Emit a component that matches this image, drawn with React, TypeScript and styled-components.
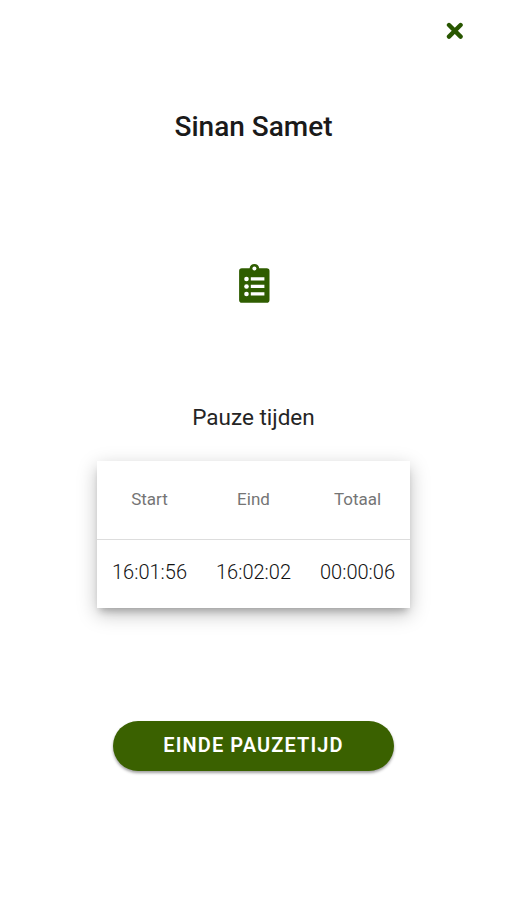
import React from "react";
import styled, { createGlobalStyle } from "styled-components";

const GlobalStyle = createGlobalStyle`
  *, *::before, *::after { box-sizing: border-box; }
  body { margin: 0; background: #fff; font-family: Roboto, "Liberation Sans", sans-serif; }
`;

const Screen = styled.main`
  display: flex;
  flex-direction: column;
  align-items: center;
  width: 506px;
  height: 900px;
  padding-left: 1px;
  background: #fff;
  overflow: hidden;
`;

const TopBar = styled.header`
  display: flex;
  justify-content: flex-end;
  width: 100%;
  height: 62px;
  padding: 22px 42px 0 0;
`;

const CloseButton = styled.button`
  width: 18px;
  height: 18px;
  padding: 0;
  border: 0;
  background: none;
  svg { display: block; }
`;

const Name = styled.h1`
  margin: 49px 0 0;
  font-size: 28px;
  line-height: 32px;
  font-weight: 500;
  color: #1a1a1a;
`;

const ClipboardIcon = styled.svg`
  margin: 120px 0 0 1px;
  width: 32px;
  height: 40px;
`;

const Subtitle = styled.h2`
  margin: 100px 0 0;
  font-size: 22.5px;
  line-height: 28px;
  font-weight: 400;
  color: #252525;
`;

const TimeCard = styled.section`
  width: 313px;
  height: 147px;
  margin-top: 30px;
  background: #fff;
  box-shadow: 0 6px 7px -3px rgba(0, 0, 0, 0.22), 0 6px 18px rgba(0, 0, 0, 0.25);
`;

const Row = styled.div<{ $head?: boolean }>`
  display: grid;
  grid-template-columns: repeat(3, 104px);
  align-items: center;
  justify-content: center;
  height: ${(p) => (p.$head ? 79 : 65)}px;
  padding-bottom: 2px;
  border-bottom: ${(p) => (p.$head ? "1px solid #ddd" : "0")};
  font-size: ${(p) => (p.$head ? 17 : 20)}px;
  font-weight: ${(p) => (p.$head ? 400 : 300)};
  color: ${(p) => (p.$head ? "#757575" : "#111")};
`;

const Cell = styled.span`
  text-align: center;
`;

const EndButton = styled.button`
  width: 281px;
  height: 50px;
  margin-top: 113px;
  padding: 0 0 3px;
  border: 0;
  border-radius: 25px;
  background: #3a6100;
  box-shadow: 0 2px 3px rgba(0, 0, 0, 0.38);
  color: #fff;
  font: 600 20px/24px Roboto, "Liberation Sans", sans-serif;
  letter-spacing: 1.1px;
`;

export default function App() {
  return (
    <>
      <GlobalStyle />
      <Screen>
        <TopBar>
          <CloseButton aria-label="Sluiten">
            <svg width="18" height="18" viewBox="0 0 18 18">
              <path
                d="M3 3 14.6 14.6M14.6 3 3 14.6"
                stroke="#285600"
                strokeWidth="4.4"
                strokeLinecap="round"
              />
            </svg>
          </CloseButton>
        </TopBar>
        <Name>Sinan Samet</Name>
        <ClipboardIcon viewBox="0 0 32 40">
          <path
            fill="#2f5d00"
            d="M3.9 5.2H11.6A4.9 5.2 0 0 1 21.2 5.2H28.7A2.8 2.8 0 0 1 31.5 8V36.9A2.8 2.8 0 0 1 28.7 39.7H3.9A2.8 2.8 0 0 1 1.1 36.9V8A2.8 2.8 0 0 1 3.9 5.2Z"
          />
          <g fill="#fff">
            <circle cx="16.4" cy="5.6" r="2" />
            <circle cx="8.5" cy="16" r="2.3" />
            <circle cx="8.5" cy="23.5" r="2.3" />
            <circle cx="8.5" cy="31" r="2.3" />
            <path d="M12.8 14.3h13.6v3.3H12.8zM12.8 21.8h13.6v3.3H12.8zM12.8 29.3h13.6v3.3H12.8z" />
          </g>
        </ClipboardIcon>
        <Subtitle>Pauze tijden</Subtitle>
        <TimeCard>
          <Row $head>
            <Cell>Start</Cell>
            <Cell>Eind</Cell>
            <Cell>Totaal</Cell>
          </Row>
          <Row>
            <Cell>16:01:56</Cell>
            <Cell>16:02:02</Cell>
            <Cell>00:00:06</Cell>
          </Row>
        </TimeCard>
        <EndButton>EINDE PAUZETIJD</EndButton>
      </Screen>
    </>
  );
}
